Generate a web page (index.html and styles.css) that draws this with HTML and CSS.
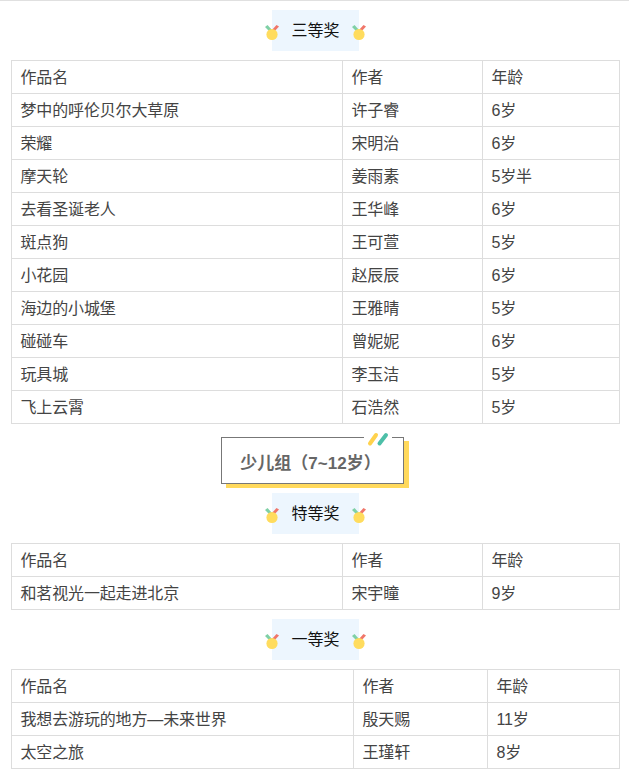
FILE: index.html
```html
<!DOCTYPE html>
<html lang="zh">
<head>
<meta charset="utf-8">
<title>获奖名单</title>
<link rel="stylesheet" href="styles.css">
</head>
<body>
<svg class="defs" width="0" height="0" aria-hidden="true">
  <symbol id="medal" viewBox="0 0 14 16">
    <path d="M0 2 L2.5 0 L8 6 L6 8 Z" fill="#7fd0a6"/>
    <path d="M14 1.5 L11.5 0 L6 6 L8 8 Z" fill="#f0766a"/>
    <circle cx="7" cy="9.5" r="5.6" fill="#ffdc5e"/>
  </symbol>
</svg>
<main class="page">
  <div class="award"><svg class="medal medal-l"><use href="#medal"/></svg><h3 class="award-name">三等奖</h3><svg class="medal medal-r"><use href="#medal"/></svg></div>
  <table class="works">
    <colgroup><col class="c1"><col class="c2"><col class="c3"></colgroup>
    <tr><td>作品名</td><td>作者</td><td>年龄</td></tr>
    <tr><td>梦中的呼伦贝尔大草原</td><td>许子睿</td><td>6岁</td></tr>
    <tr><td>荣耀</td><td>宋明治</td><td>6岁</td></tr>
    <tr><td>摩天轮</td><td>姜雨素</td><td>5岁半</td></tr>
    <tr><td>去看圣诞老人</td><td>王华峰</td><td>6岁</td></tr>
    <tr><td>斑点狗</td><td>王可萱</td><td>5岁</td></tr>
    <tr><td>小花园</td><td>赵辰辰</td><td>6岁</td></tr>
    <tr><td>海边的小城堡</td><td>王雅晴</td><td>5岁</td></tr>
    <tr><td>碰碰车</td><td>曾妮妮</td><td>6岁</td></tr>
    <tr><td>玩具城</td><td>李玉洁</td><td>5岁</td></tr>
    <tr><td>飞上云霄</td><td>石浩然</td><td>5岁</td></tr>
  </table>
  <div class="group-wrap">
    <div class="group">
      <h2 class="group-name">少儿组（7~12岁）</h2>
      <svg class="slashes" width="30" height="16" viewBox="0 0 30 16" aria-hidden="true">
        <rect x="2" y="6" width="28" height="2" fill="#fff"/>
        <path d="M8 12.5 L14 4" stroke="#ffd24d" stroke-width="4" stroke-linecap="round"/>
        <path d="M17.5 12.5 L24 4" stroke="#4dbfa8" stroke-width="4" stroke-linecap="round"/>
      </svg>
    </div>
  </div>
  <div class="award"><svg class="medal medal-l"><use href="#medal"/></svg><h3 class="award-name">特等奖</h3><svg class="medal medal-r"><use href="#medal"/></svg></div>
  <table class="works">
    <colgroup><col class="c1"><col class="c2"><col class="c3"></colgroup>
    <tr><td>作品名</td><td>作者</td><td>年龄</td></tr>
    <tr><td>和茗视光一起走进北京</td><td>宋宇瞳</td><td>9岁</td></tr>
  </table>
  <div class="award"><svg class="medal medal-l"><use href="#medal"/></svg><h3 class="award-name">一等奖</h3><svg class="medal medal-r"><use href="#medal"/></svg></div>
  <table class="works">
    <colgroup><col class="w1"><col class="w2"><col class="w3"></colgroup>
    <tr><td>作品名</td><td>作者</td><td>年龄</td></tr>
    <tr><td>我想去游玩的地方—未来世界</td><td>殷天赐</td><td>11岁</td></tr>
    <tr><td>太空之旅</td><td>王瑾轩</td><td>8岁</td></tr>
  </table>
</main>
</body>
</html>
```

FILE: styles.css
```css
html, body {
  margin: 0;
  padding: 0;
  background: #fff;
}
body {
  font-family: "Liberation Sans", "Noto Sans CJK SC", sans-serif;
  font-size: 16px;
  color: #444;
}
.defs {
  position: absolute;
}
.page {
  width: 629px;
  padding: 0 9px 8px 11px;
  box-sizing: border-box;
  border-top: 1px solid #e0e0e0;
}
.award {
  display: flex;
  justify-content: center;
  align-items: center;
  height: 41px;
  margin: 9px 0;
}
.award-name {
  margin: 0;
  width: 87px;
  height: 41px;
  line-height: 41px;
  text-align: center;
  font-size: 16px;
  font-weight: 400;
  color: #111;
  background: #edf6fe;
}
.medal {
  width: 14px;
  height: 16px;
  position: relative;
  top: 2px;
}
.medal-l {
  margin-right: -7px;
}
.medal-r {
  margin-left: -7px;
}
.works {
  width: 608px;
  border-collapse: collapse;
  table-layout: fixed;
}
.works td {
  height: 33px;
  padding: 2px 9px 0 8.5px;
  border: 1px solid #ddd;
  font-size: 16px;
  letter-spacing: -0.15px;
  line-height: 30px;
  box-sizing: border-box;
}
.c1 { width: 331px; }
.c2 { width: 140px; }
.c3 { width: 137px; }
.w1 { width: 342px; }
.w2 { width: 134px; }
.w3 { width: 132px; }
.group-wrap {
  display: flex;
  justify-content: center;
  margin-top: 13px;
  padding-right: 6px;
}
.group {
  position: relative;
  width: 183px;
  height: 47px;
  box-sizing: border-box;
  border: 1px solid #777;
  background: #fff;
  box-shadow: 5px 4px 0 #ffd95c;
}
.group-name {
  margin: 0;
  padding-right: 4px;
  text-align: center;
  font-size: 17px;
  font-weight: 700;
  line-height: 51px;
  white-space: nowrap;
  color: #666;
}
.slashes {
  position: absolute;
  right: 11px;
  top: -7px;
}
```
